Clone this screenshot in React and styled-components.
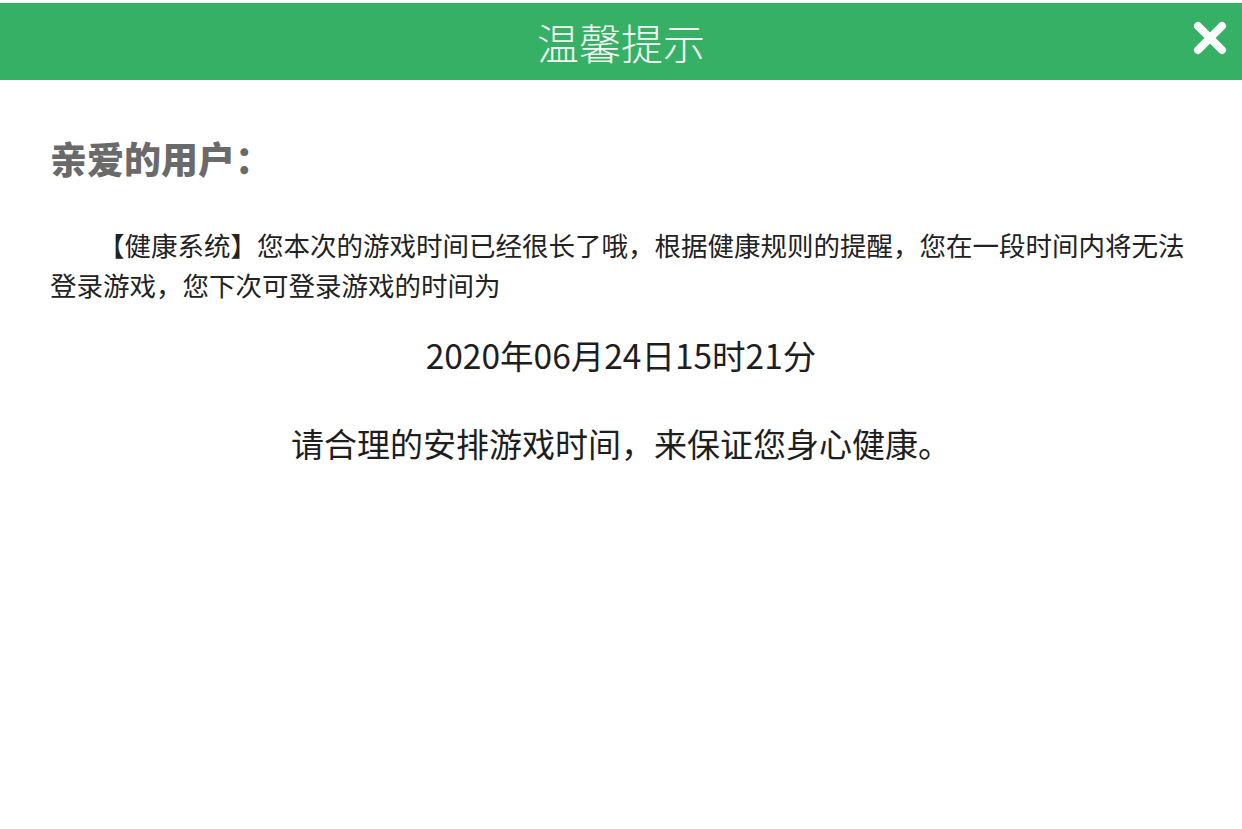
import styled, { createGlobalStyle } from "styled-components";

const GlobalStyle = createGlobalStyle`
    html, body {
        margin: 0;
        padding: 0;
        background: #ffffff;
    }
    body {
        font-family: "Noto Sans CJK SC", "Noto Sans", sans-serif;
    }
`;

const Page = styled.div`
    width: 1242px;
    height: 829px;
    padding-top: 3px;
    box-sizing: border-box;
    background: #ffffff;
    overflow: hidden;
`;

const Header = styled.div`
    position: relative;
    height: 77px;
    background: #36b065;
    display: flex;
    align-items: center;
    justify-content: center;
`;

const Title = styled.h1`
    margin: 0;
    color: #f4f8f4;
    font-size: 42px;
    font-weight: 300;
    line-height: 1;
`;

const CloseButton = styled.button`
    position: absolute;
    right: 14px;
    top: 17px;
    width: 36px;
    height: 36px;
    padding: 0;
    border: 0;
    background: transparent;
    cursor: pointer;
    display: flex;
    align-items: center;
    justify-content: center;
`;

const Content = styled.div`
    padding: 0 50px;
`;

const Greeting = styled.h2`
    margin: 58px 0 0;
    font-size: 37px;
    line-height: 40px;
    font-weight: 900;
    color: #6a6a6a;
`;

const Message = styled.p`
    margin: 47px 0 0;
    max-width: 1150px;
    font-size: 26.5px;
    line-height: 40px;
    color: #222222;
    text-indent: 48px;
`;

const Centered = styled.p`
    margin: ${(props) => props.$gap}px 0 0;
    text-align: center;
    font-size: ${(props) => props.$size}px;
    line-height: ${(props) => props.$lh}px;
    color: #1e1e1e;
`;

function CloseIcon() {
    return (
        <svg width="36" height="36" viewBox="0 0 36 36">
            <path
                d="M6 6 L30 30 M30 6 L6 30"
                stroke="#ffffff"
                strokeWidth="8"
                strokeLinecap="round"
                fill="none"
            />
        </svg>
    );
}

export default function App() {
    return (
        <>
            <GlobalStyle />
            <Page>
                <Header>
                    <Title>温馨提示</Title>
                    <CloseButton aria-label="关闭">
                        <CloseIcon />
                    </CloseButton>
                </Header>
                <Content>
                    <Greeting>亲爱的用户：</Greeting>
                    <Message>
                        【健康系统】您本次的游戏时间已经很长了哦，根据健康规则的提醒，您在一段时间内将无法登录游戏，您下次可登录游戏的时间为
                    </Message>
                    <Centered $gap={25} $size={33.5} $lh={50}>
                        2020年06月24日15时21分
                    </Centered>
                    <Centered $gap={41} $size={33} $lh={44}>
                        请合理的安排游戏时间，来保证您身心健康。
                    </Centered>
                </Content>
            </Page>
        </>
    );
}
